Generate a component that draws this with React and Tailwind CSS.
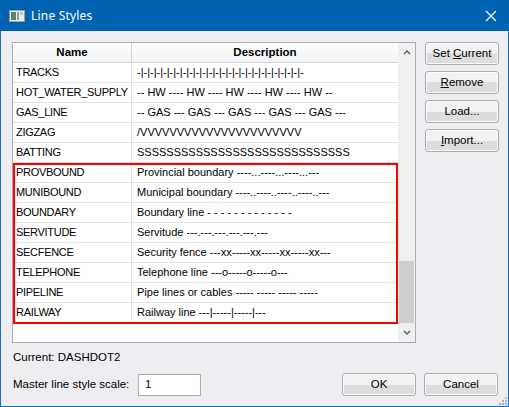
import React from "react";

const rows = [
  ["TRACKS", "-|-|-|-|-|-|-|-|-|-|-|-|-|-|-|-|-|-|-|-|-|-|-|-|-|-"],
  ["HOT_WATER_SUPPLY", "-- HW ---- HW ---- HW ---- HW ---- HW --"],
  ["GAS_LINE", "-- GAS --- GAS --- GAS --- GAS --- GAS ---"],
  ["ZIGZAG", "/VVVVVVVVVVVVVVVVVVVVVV"],
  ["BATTING", "SSSSSSSSSSSSSSSSSSSSSSSSSSSSS"],
  ["PROVBOUND", "Provincial boundary ----...----...----...---"],
  ["MUNIBOUND", "Municipal boundary ----..----..----..----..---"],
  ["BOUNDARY", "Boundary line - - - - - - - - - - - - -"],
  ["SERVITUDE", "Servitude ---.---.---.---.---.---"],
  ["SECFENCE", "Security fence ---xx-----xx-----xx-----xx---"],
  ["TELEPHONE", "Telephone line ---o-----o-----o---"],
  ["PIPELINE", "Pipe lines or cables ----- ----- ----- -----"],
  ["RAILWAY", "Railway line ---|-----|-----|---"],
];

function Btn({ children, className = "" }) {
  return (
    <div
      className={
        "h-[23px] w-[74px] shrink-0 flex items-center justify-center rounded-[3px] border border-[#acacac] bg-gradient-to-b from-[#f2f2f2] from-50% to-[#dddddd] to-50% text-[11.5px] text-black shadow-[inset_0_0_0_1px_#fbfbfb] " +
        className
      }
    >
      {children}
    </div>
  );
}

export default function App() {
  return (
    <div
      className="w-[509px] h-[407px] flex flex-col bg-[#1a6fc0]"
      style={{ fontFamily: '"Liberation Sans", Arial, sans-serif' }}
    >
      {/* Title bar */}
      <div className="h-[31px] shrink-0 bg-[#0063b1] flex items-center pl-[9px] pr-[12px] text-white">
        <svg width="16" height="12" viewBox="0 0 16 12" className="shrink-0">
          <rect x="0.5" y="0.5" width="15" height="11" fill="#e8ecec" stroke="#9aa6a6" />
          <rect x="2" y="2" width="5" height="8" fill="#5e7e76" />
          <rect x="8" y="2" width="2" height="8" fill="#86a09a" />
          <rect x="11" y="2" width="3" height="3" fill="#b9c6c4" />
        </svg>
        <span className="ml-[6px] text-[12px] tracking-[0.2px]" style={{ fontFamily: '"Noto Sans", sans-serif' }}>
          Line Styles
        </span>
        <div className="flex-1" />
        <svg width="12" height="12" viewBox="0 0 12 12">
          <path d="M1 1 L11 11 M11 1 L1 11" stroke="white" strokeWidth="1.1" />
        </svg>
      </div>

      {/* Body */}
      <div className="flex-1 mx-[1px] mb-[1px] bg-[#eeeef2] relative pt-[11px] pl-[11px] pr-[10px] text-[11px] text-black">
        <div className="flex gap-[9px]">
          {/* List */}
          <div className="relative shrink-0 w-[404px] h-[301px] border border-[#acacac] bg-white flex">
            <div className="flex-1 min-w-0 flex flex-col">
              <div className="h-[20px] flex border-b border-[#d5d5d5] bg-gradient-to-b from-[#ffffff] to-[#f1f2f4] font-bold text-[11.5px]">
                <div className="w-[119px] shrink-0 border-r border-[#d5d5d5] flex items-center justify-center">Name</div>
                <div className="flex-1 min-w-0 flex items-center justify-center">Description</div>
              </div>
              {rows.map(([n, d]) => (
                <div key={n} className="h-[20px] flex border-b border-[#e3e3e3]">
                  <div className="w-[119px] shrink-0 border-r border-[#e3e3e3] flex items-center pl-[3px] whitespace-nowrap overflow-hidden tracking-[-0.3px]">
                    {n}
                  </div>
                  <div className="flex-1 min-w-0 flex items-center pl-[5px] whitespace-nowrap overflow-hidden">
                    {d}
                  </div>
                </div>
              ))}
            </div>
            {/* scrollbar */}
            <div className="w-[17px] shrink-0 bg-[#f0f0f0] flex flex-col">
              <div className="h-[18px] flex items-center justify-center">
                <svg width="8" height="6" viewBox="0 0 8 6">
                  <path d="M1 5 L4 2 L7 5" stroke="#606060" strokeWidth="1.5" fill="none" />
                </svg>
              </div>
              <div className="h-[200px]" />
              <div className="h-[62px] mx-[1px] bg-[#cdcdcd]" />
              <div className="flex-1 flex items-center justify-center">
                <svg width="8" height="6" viewBox="0 0 8 6">
                  <path d="M1 1 L4 4 L7 1" stroke="#606060" strokeWidth="1.5" fill="none" />
                </svg>
              </div>
            </div>
            {/* red highlight */}
            <div className="absolute left-0 top-[120px] w-[385px] h-[161px] border-2 border-[#ff0000] pointer-events-none" />
          </div>

          {/* Buttons */}
          <div className="flex flex-col gap-[6px]">
            <Btn>
              Set&nbsp;<span className="underline">C</span>urrent
            </Btn>
            <Btn>
              <span className="underline">R</span>emove
            </Btn>
            <Btn>Load...</Btn>
            <Btn>
              <span className="underline">I</span>mport...
            </Btn>
          </div>
        </div>

        <div className="mt-[8px] h-[14px] flex items-center pl-[1px] text-[11.5px]">Current: DASHDOT2</div>

        <div className="mt-[8px] flex items-center text-[11.5px]">
          <div className="w-[126px] pl-[1px]">Master line style scale:</div>
          <div className="w-[63px] h-[22px] bg-white border border-[#acacac] flex items-center pl-[6px]">1</div>
          <div className="flex-1" />
          <div className="flex gap-[8px]">
            <Btn>OK</Btn>
            <Btn>Cancel</Btn>
          </div>
        </div>

        {/* resize grip */}
        <svg width="10" height="10" viewBox="0 0 10 10" className="absolute right-[1px] bottom-[1px]">
          {[[8, 2], [8, 5], [5, 5], [8, 8], [5, 8], [2, 8]].map(([x, y], i) => (
            <rect key={i} x={x} y={y} width="2" height="2" fill="#b0b0b8" />
          ))}
        </svg>
      </div>
    </div>
  );
}
